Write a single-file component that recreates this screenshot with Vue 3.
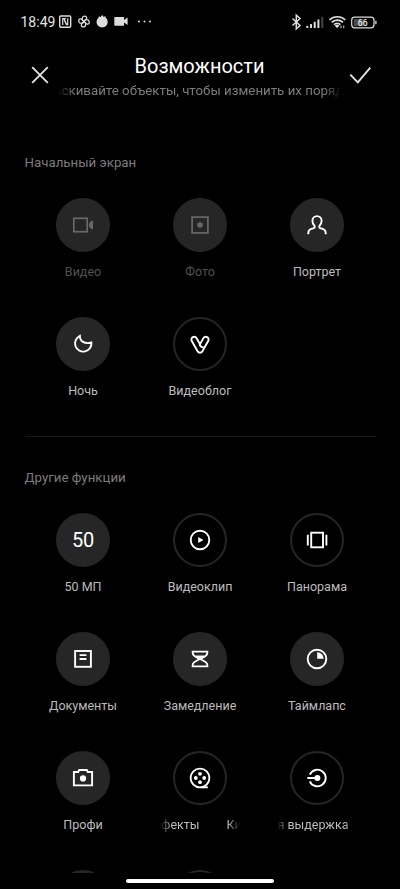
<script setup>
const home = [
  { icon: 'video', label: 'Видео', filled: true, dim: true },
  { icon: 'photo', label: 'Фото', filled: true, dim: true },
  { icon: 'portrait', label: 'Портрет', filled: true },
  { icon: 'night', label: 'Ночь', filled: true },
  { icon: 'vlog', label: 'Видеоблог' },
]
const other = [
  { icon: 'mp', label: '50 МП', filled: true },
  { icon: 'clip', label: 'Видеоклип' },
  { icon: 'pano', label: 'Панорама' },
  { icon: 'docs', label: 'Документы', filled: true },
  { icon: 'slow', label: 'Замедление', filled: true },
  { icon: 'lapse', label: 'Таймлапс', filled: true },
  { icon: 'pro', label: 'Профи', filled: true },
  { icon: 'film', label: 'Киноэффекты', scroll: 'loop' },
  { icon: 'long', label: 'Длинная выдержка', scroll: 'end' },
  { icon: '', label: '', filled: true },
  { icon: '', label: '' },
]
const sections = [
  { title: 'Начальный экран', items: home },
  { title: 'Другие функции', items: other },
]
const icons = {
  video: '<rect x="2.8" y="5.3" width="13.4" height="13.4"/><path class="solid" d="M22 7.6v8.8c-2.6-.6-4.2-2.4-4.2-4.4s1.6-3.8 4.2-4.4z"/>',
  photo: '<rect x="4.1" y="4.1" width="15.8" height="15.8"/><circle class="solid" cx="12" cy="12" r="2.8"/>',
  portrait: '<path d="M3.300 21.300v-1.200c0-2.400 1.400-3.700 3.800-4.400 2.300-.6 3.300-1.500 2.300-3.100C8.100 11.200 7.400 9.700 7.400 7.700a4.600 4.600 0 0 1 9.200 0c0 2-.7 3.500-2 4.900-1 1.600 0 2.500 2.300 3.100 2.400.7 3.800 2 3.800 4.400v1.200"/>',
  night: '<path d="M8.900 3.900A8.200 8.200 0 1 0 20.400 10.500C13.500 12.400 8.700 9.300 8.900 3.900z"/>',
  vlog: '<path d="M9.600 19.300 3.800 9C1.900 5.500 6.900 3.300 8.700 6.400L12 12.200l3.300-5.800c1.800-3.100 6.800-.9 4.900 2.600L14.400 19.300c-1.200 2-3.600 2-4.800 0z"/><path d="M11.800 11.800c-.1 2.200 1.500 3.700 3.900 3.500"/>',
  clip: '<circle cx="12" cy="12" r="9.300"/><path class="solid" d="M10.200 9v6l5.200-3z"/>',
  pano: '<rect x="6.200" y="4.700" width="11.800" height="14.600"/><path d="M2.800 6.800v10.600M21.400 6.800v10.600"/>',
  docs: '<rect x="4.100" y="4" width="15.800" height="15.800"/><path d="M8.600 8.100h6.800M8.600 12h6.800"/>',
  slow: '<path d="M4.700 4.600h14.600v1.600c0 2.400-3.300 4.100-7.300 5.800-4-1.700-7.300-3.400-7.300-5.800z"/><path d="M4.700 19.400h14.600v-1.600c0-2.400-3.300-4.100-7.300-5.800-4 1.700-7.300 3.400-7.300 5.800z"/><path class="solid" d="M7.500 8.600h9L12 12.700z"/>',
  lapse: '<circle cx="12" cy="12" r="9.300"/><path class="solid" d="M12.200 5.300a6.500 6.500 0 0 1 6.500 6.500h-6.500z"/>',
  pro: '<path d="M2.900 19.400V6h4.300l1-2h7.600l1 2h4.300v13.400z"/><circle class="solid" cx="12" cy="12.400" r="3.100"/>',
  film: '<circle cx="12" cy="12" r="9.400"/><path d="M13.500 21.300h6.300"/><g class="solid"><circle cx="12" cy="7.800" r="1.900"/><circle cx="7.800" cy="12" r="1.900"/><circle cx="16.200" cy="12" r="1.900"/><circle cx="12" cy="16.200" r="1.900"/></g>',
  long: '<path d="M4.800 8.700A8.300 8.300 0 1 1 4.800 15.300M2.300 12H12"/><circle class="solid" cx="12.400" cy="12" r="3"/>',
}
</script>

<template>
  <div class="screen">
    <div class="status">
      <span class="time">18:49</span>
      <svg class="left-icons" width="96" height="16" viewBox="58 14 96 16">
        <g fill="none" stroke="#ddd" stroke-width="1.400">
          <rect x="59.700" y="16" width="11" height="11.300" rx="1" />
          <path d="M62.700 25v-6.300h1.300l2.700 5.800M67.700 18.300v6.300h-1.300l-2.300-5M65.800 18.700h-2" stroke-width="1.200" />
          <g stroke-width="1.300">
            <path d="M84 21.500c-2.600-1.200-2.500-4.900.4-5.300 2.700-.3 2.800 2.500 1.200 3.700z" />
            <path d="M84 21.500c1.200-2.600 4.900-2.500 5.300.4.300 2.700-2.500 2.800-3.700 1.200z" />
            <path d="M84 21.500c2.600 1.200 2.500 4.900-.4 5.300-2.700.3-2.800-2.500-1.200-3.700z" />
            <path d="M84 21.500c-1.200 2.600-4.900 2.500-5.300-.4-.3-2.700 2.500-2.800 3.700-1.200z" />
          </g>
        </g>
        <g fill="#ddd">
          <path d="M98.500 17.700l.4-1.500 1.700.7 1.600-2 1.500 2 1.800-1 .1 1.700a5.600 5.600 0 1 1-7.100.1z" />
          <path d="M115 17h8.500q.6 0 .6.600v2.400l3.500-2.500v7.600l-3.500-2.500V25q0 .7-.6.700H115q-.7 0-.7-.7v-7.300q0-.7.700-.7z" />
          <circle cx="139" cy="21.500" r="1" /><circle cx="144.500" cy="21.500" r="1" /><circle cx="150" cy="21.500" r="1" />
        </g>
      </svg>
      <svg class="right-icons" width="88" height="18" viewBox="290 12 88 18">
        <path d="M292.500 17.500l7.500 7-3.700 3.300V14.200l3.700 3.300-7.500 7" fill="none" stroke="#ddd" stroke-width="1.500" />
        <g fill="#ddd">
          <rect x="306.300" y="24.800" width="2" height="2.200" /><rect x="310" y="23.100" width="2" height="3.900" />
          <rect x="313.700" y="20.800" width="2" height="6.200" /><rect x="317.400" y="18.500" width="2" height="8.500" />
          <rect x="321.300" y="15.800" width="2" height="11.200" fill="#444" />
          <path d="M334.800 24.500l2.300 2.800 2.300-2.800a3.600 3.600 0 0 0-4.600 0z" />
          <path d="M341 27.300v-2.800M343.700 24.500v2.800" fill="none" stroke="#aaa" stroke-width="1.200" />
        </g>
        <g fill="none" stroke="#ddd" stroke-width="1.700">
          <path d="M329.500 18.900c4.400-4.200 11.300-4.200 15.800 0M331.700 21.400c3-3 8-3 11.300 0M334 23.700c1.800-1.700 4.600-1.700 6.400 0" />
        </g>
        <rect x="353.700" y="18" width="10" height="7.200" rx="1" fill="#4c4c4c" />
        <rect x="351.700" y="16.200" width="22.300" height="10.600" rx="3" fill="none" stroke="#ddd" stroke-width="1.200" />
        <rect x="375" y="19.700" width="1.700" height="3.600" rx=".6" fill="#aaa" />
        <text x="362.700" y="24.700" text-anchor="middle" font-size="8.500" font-weight="500" fill="#eee">66</text>
      </svg>
    </div>

    <header class="header">
      <svg class="close" width="20" height="20" viewBox="0 0 20 20"><path d="M2.200 2.200l15.600 15.600M17.800 2.200L2.200 17.800" /></svg>
      <div class="heading">
        <h1>Возможности</h1>
        <p class="hint"><span>Перетаскивайте объекты, чтобы изменить их порядок</span></p>
      </div>
      <svg class="check" width="24" height="20" viewBox="0 0 24 20"><path d="M2.300 9.700l7.500 7.600L22.300 2.700" /></svg>
    </header>

    <main class="content">
      <section v-for="s in sections" :key="s.title" class="section">
        <h2>{{ s.title }}</h2>
        <div class="grid">
          <div v-for="(m, i) in s.items" :key="i" class="mode" :class="{ dim: m.dim }">
            <div class="disc" :class="{ filled: m.filled }">
              <span v-if="m.icon === 'mp'" class="mp">50</span>
              <svg v-else-if="m.icon" class="icon" width="24" height="24" viewBox="0 0 24 24" v-html="icons[m.icon]" />
            </div>
            <div class="label" :class="m.scroll">
              <span class="first"><span>{{ m.label }}</span></span>
              <span v-if="m.scroll === 'loop'">{{ m.label }}</span>
            </div>
          </div>
        </div>
      </section>
    </main>

    <footer class="nav"><div class="pill"></div></footer>
  </div>
</template>

<style>
body { background: #000; }
</style>

<style scoped>
.screen {
  width: 400px;
  height: 889px;
  overflow: hidden;
  display: flex;
  flex-direction: column;
  background: #000;
  color: #fff;
  font-family: Roboto, "Liberation Sans", sans-serif;
}
.status {
  flex: none;
  height: 43px;
  padding-left: 20.5px;
  box-sizing: border-box;
  display: flex;
  align-items: center;
}
.time { width: 37.5px; font-size: 14px; color: #e4e4e4; }
.right-icons { margin-left: 136px; }
.header {
  flex: none;
  height: 66px;
  display: flex;
  align-items: flex-start;
  padding: 0 28px 0 30px;
}
.close, .check { flex: none; margin-top: 22px; }
.close path, .check path { fill: none; stroke: #e2e2e2; stroke-width: 1.9; }
.heading { flex: 1; min-width: 0; margin: 0 7px 0 8px; }
h1 {
  margin: 11px 0 0;
  font-size: 20px;
  line-height: 24px;
  font-weight: 400;
  text-align: center;
}
.hint {
  margin: 4px 0 0;
  height: 20px;
  line-height: 18px;
  font-size: 13.3px;
  color: #7c7c7c;
  overflow: hidden;
  white-space: nowrap;
  -webkit-mask-image: linear-gradient(90deg, transparent, #000 16px, #000 calc(100% - 16px), transparent);
  mask-image: linear-gradient(90deg, transparent, #000 16px, #000 calc(100% - 16px), transparent);
}
.hint span { margin-left: -41px; }
.content {
  flex: none;
  height: 763.5px;
  overflow: hidden;
  padding: 0 24.5px;
}
.section { height: 327.2px; }
.section + .section {
  height: auto;
  border-top: 1px solid #181818;
}
h2 {
  margin: 0;
  padding-top: 44px;
  font-size: 13.3px;
  line-height: 20px;
  font-weight: 400;
  color: #7c7c7c;
}
.section + .section h2 { padding-top: 31px; }
.grid {
  display: grid;
  grid-template-columns: repeat(3, 117px);
  grid-auto-rows: 119.2px;
  padding-top: 24.5px;
}
.mode { display: flex; flex-direction: column; align-items: center; }
.disc {
  flex: none;
  width: 54px;
  height: 54px;
  box-sizing: border-box;
  border: 2px solid #262626;
  border-radius: 50%;
  display: flex;
  align-items: center;
  justify-content: center;
}
.filled { background: #262626; }
.icon { fill: none; stroke: #fff; stroke-width: 1.9; }
.icon :deep(.solid) { fill: #fff; stroke: none; }
.dim .icon { stroke: #686868; stroke-width: 1.7; }
.dim .icon :deep(.solid) { fill: #686868; }
.mp { font-size: 20px; line-height: 24px; letter-spacing: -.2px; }
.label {
  margin-top: 10px;
  height: 20px;
  line-height: 20px;
  font-size: 12.5px;
  color: #bcbcbc;
  white-space: nowrap;
}
.dim .label { color: #505050; }
.loop, .end {
  width: 80px;
  display: flex;
  overflow: hidden;
  -webkit-mask-image: linear-gradient(90deg, transparent, #000 12px, #000 calc(100% - 12px), transparent);
  mask-image: linear-gradient(90deg, transparent, #000 12px, #000 calc(100% - 12px), transparent);
}
.loop .first {
  flex: none;
  width: 39.5px;
  margin-right: 27px;
  display: flex;
  justify-content: flex-end;
}
.end .first {
  flex: none;
  width: 71.5px;
  display: flex;
  justify-content: flex-end;
}
.nav { flex: 1; display: flex; justify-content: center; }
.pill { width: 148px; height: 4px; margin-top: 6px; border-radius: 2px; background: #fff; }
</style>
